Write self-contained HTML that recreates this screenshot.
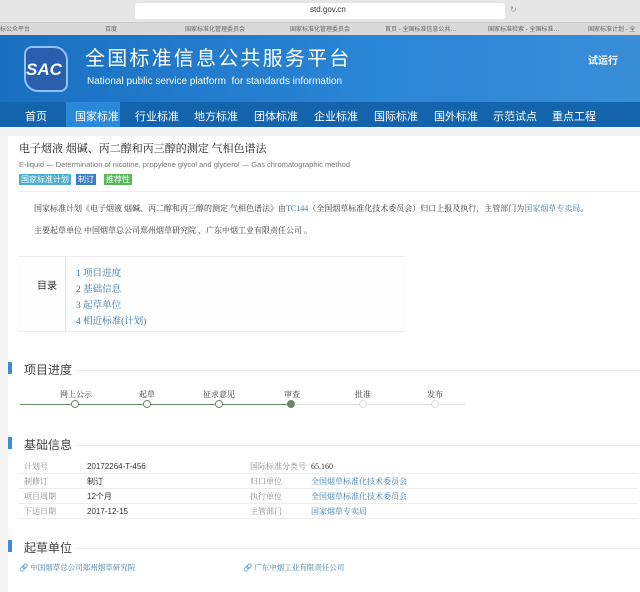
<!DOCTYPE html>
<html><head><meta charset="utf-8"><style>
*{margin:0;padding:0;box-sizing:border-box}
body{width:640px;height:592px;overflow:hidden;background:#fff;font-family:"Liberation Sans","Noto Sans CJK SC",sans-serif;position:relative;color:#333}
.a{position:absolute;white-space:nowrap}
.serif{font-family:"Liberation Serif","Noto Serif CJK SC",serif}
.lk{color:#3a7aa8}
.sec{position:absolute;left:8px;width:4px;height:12px;background:#3b8ede}
.sect{position:absolute;left:24px;font-size:12px;color:#444}
.hl{position:absolute;left:75px;right:0;height:1px;background:#eee}
.row{position:absolute;left:18px;width:620px;height:1px;background:#eee}
.c{position:absolute;width:8px;height:8px;border-radius:50%;border:1px solid #6a8a6a;background:#fff;top:400px}
</style></head><body>
<div class="a" style="left:0;top:0;width:640px;height:22px;background:#e6e6e6"></div>
<div class="a" style="left:135px;top:3px;width:370px;height:16px;background:#fff;border-radius:3px"></div>
<div class="a" style="left:310px;top:5px;font-size:8px;color:#333">std.gov.cn</div>
<div class="a" style="left:510px;top:5px;font-size:8px;color:#999">↻</div>
<div class="a" style="left:0;top:22px;width:640px;height:13px;background:#d9d9d9;border-top:1px solid #c8c8c8"></div>
<div class="a" style="top:24px;left:0;font-size:6px;color:#666;width:640px;height:9px">
<span class="a" style="left:0">标公众平台</span><span class="a" style="left:105px">百度</span><span class="a" style="left:185px">国家标准化管理委员会</span><span class="a" style="left:290px">国家标准化管理委员会</span><span class="a" style="left:385px">首页 - 全国标准信息公共…</span><span class="a" style="left:488px">国家标准检索 - 全国标准…</span><span class="a" style="left:588px">国家标准计划 - 全</span></div>
<div class="a" style="left:0;top:35px;width:640px;height:67px;background:linear-gradient(90deg,#1a6fc0,#2a86d6 60%,#3a8ed8)"></div>
<div class="a" style="left:24px;top:46px;width:44px;height:46px;background:#2a5fb0;border:2px solid #8fc3ff;border-radius:8px 14px 8px 14px"></div>
<div class="a" style="left:26px;top:60px;font-size:17px;font-weight:bold;font-style:italic;color:#fff">SAC</div>
<div class="a" style="left:85px;top:47px;font-size:20px;line-height:24px;color:#fff;letter-spacing:2.2px">全国标准信息公共服务平台</div>
<div class="a" style="left:87px;top:76px;font-size:10px;color:#fff">National public service platform &nbsp;for standards information</div>
<div class="a" style="left:588px;top:52px;font-size:10px;color:#fff;font-weight:bold">试运行</div>
<div class="a" style="left:0;top:102px;width:640px;height:25px;background:#1463ad"></div>
<div class="a" style="left:66px;top:102px;width:54px;height:25px;background:#2a88d8"></div>
<div class="a" style="top:108px;left:0;font-size:11px;color:#fff;width:640px;height:14px">
<span class="a" style="left:25px">首页</span><span class="a" style="left:75px">国家标准</span><span class="a" style="left:135px">行业标准</span><span class="a" style="left:194px">地方标准</span><span class="a" style="left:254px">团体标准</span><span class="a" style="left:314px">企业标准</span><span class="a" style="left:374px">国际标准</span><span class="a" style="left:434px">国外标准</span><span class="a" style="left:493px">示范试点</span><span class="a" style="left:552px">重点工程</span></div>
<div class="a" style="left:0;top:127px;width:640px;height:9px;background:#f2f2f2"></div>
<div class="a" style="left:0;top:136px;width:8px;height:456px;background:#f5f5f5"></div>
<div class="a serif" style="left:19px;top:143px;font-size:11px;line-height:13px;color:#222">电子烟液 烟碱、丙二醇和丙三醇的测定 气相色谱法</div>
<div class="a" style="left:19px;top:160px;font-size:7.5px;color:#777">E-liquid — Determination of nicotine, propylene glycol and glycerol — Gas chromatographic method</div>
<div class="a" style="left:19px;top:174px;height:11px;padding:0 2px;background:#4aaed0;color:#fff;font-size:8px;line-height:11px">国家标准计划</div>
<div class="a" style="left:76px;top:174px;height:11px;padding:0 2px;background:#3a7ec8;color:#fff;font-size:8px;line-height:11px">制订</div>
<div class="a" style="left:104px;top:174px;height:11px;padding:0 2px;background:#5cb85c;color:#fff;font-size:8px;line-height:11px">推荐性</div>
<div class="a" style="left:18px;top:191px;width:622px;height:1px;background:#eee"></div>
<div class="a serif" style="left:34px;top:203px;font-size:8px;color:#333">国家标准计划《电子烟液 烟碱、丙二醇和丙三醇的测定 气相色谱法》由<span class="lk">TC144</span>（全国烟草标准化技术委员会）归口上报及执行，主管部门为<span class="lk">国家烟草专卖局</span>。</div>
<div class="a serif" style="left:34px;top:225px;font-size:8px;color:#333">主要起草单位 中国烟草总公司郑州烟草研究院 、广东中烟工业有限责任公司 。</div>
<div class="a" style="left:18px;top:256px;width:387px;height:76px;border-top:1px solid #eee;border-bottom:1px solid #eee;background:#fdfdfd"></div>
<div class="a" style="left:65px;top:256px;width:1px;height:76px;background:#e6e6e6"></div>
<div class="a" style="left:37px;top:277px;font-size:10px;color:#333">目录</div>
<div class="a serif" style="left:76px;top:266px;font-size:9.5px;line-height:16px;color:#3a7aa8">1 项目进度<br>2 基础信息<br>3 起草单位<br>4 相近标准(计划)</div>
<div class="sec" style="top:362px"></div><div class="sect" style="top:361px">项目进度</div><div class="hl" style="top:370px"></div>
<div class="a serif" style="top:389px;left:0;font-size:8px;color:#333;width:640px;height:12px">
<span class="a" style="left:60px">网上公示</span><span class="a" style="left:139px">起草</span><span class="a" style="left:203px">征求意见</span><span class="a" style="left:284px">审查</span><span class="a" style="left:355px">批准</span><span class="a" style="left:427px">发布</span></div>
<div class="a" style="left:20px;top:404px;width:271px;height:1px;background:#6a8a6a"></div>
<div class="a" style="left:291px;top:404px;width:174px;height:1px;background:#ddd"></div>
<div class="c" style="left:71px"></div><div class="c" style="left:143px"></div><div class="c" style="left:215px"></div>
<div class="c" style="left:287px;background:#6a8a6a"></div>
<div class="c" style="left:359px;border-color:#ddd"></div><div class="c" style="left:431px;border-color:#ddd"></div>
<div class="sec" style="top:437px"></div><div class="sect" style="top:436px">基础信息</div><div class="hl" style="top:445px"></div>
<div class="a" style="top:459px;left:0;font-size:8px;line-height:15px;width:640px;height:64px">
<div class="a serif" style="left:24px;color:#888">计划号<br>制修订<br>项目周期<br>下达日期</div>
<div class="a" style="left:87px;color:#333">20172264-T-456<br>制订<br>12个月<br>2017-12-15</div>
<div class="a serif" style="left:250px;color:#888">国际标准分类号<br>归口单位<br>执行单位<br>主管部门</div>
<div class="a serif" style="left:311px;color:#333">65.160<br><span class="lk">全国烟草标准化技术委员会</span><br><span class="lk">全国烟草标准化技术委员会</span><br><span class="lk">国家烟草专卖局</span></div>
</div>
<div class="row" style="top:473px"></div><div class="row" style="top:488px"></div><div class="row" style="top:503px"></div><div class="row" style="top:518px"></div>
<div class="sec" style="top:540px"></div><div class="sect" style="top:539px">起草单位</div><div class="hl" style="top:548px"></div>
<div class="a serif lk" style="left:19px;top:562px;font-size:7.5px">🔗 中国烟草总公司郑州烟草研究院</div>
<div class="a serif lk" style="left:243px;top:562px;font-size:7.5px">🔗 广东中烟工业有限责任公司</div>
</body></html>
